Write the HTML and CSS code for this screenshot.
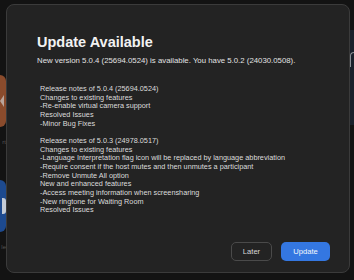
FILE: index.html
```html
<!DOCTYPE html>
<html lang="en">
<head>
  <meta charset="UTF-8">
  <meta name="viewport" content="width=device-width, initial-scale=1.0">
  <title>Update Available</title>
  <link rel="stylesheet" href="styles.css">
</head>
<body>

  <div class="screen">
    <div class="side-left">
      <div class="tile tile-orange"><span class="tile-glyph"></span></div>
      <div class="tile-label">rt</div>
      <div class="tile tile-blue"><span class="tile-blob"></span></div>
      <div class="tile-label">le</div>
    </div>

    <div class="dialog">
      <h2 class="title">Update Available</h2>
      <p class="subtitle">New version 5.0.4 (25694.0524) is available. You have 5.0.2 (24030.0508).</p>

      <div class="notes">
        <div>Release notes of 5.0.4 (25694.0524)</div>
        <div>Changes to existing features</div>
        <div>-Re-enable virtual camera support</div>
        <div>Resolved Issues</div>
        <div>-Minor Bug Fixes</div>
        <div>&nbsp;</div>
        <div>Release notes of 5.0.3 (24978.0517)</div>
        <div>Changes to existing features</div>
        <div>-Language Interpretation flag icon will be replaced by language abbreviation</div>
        <div>-Require consent if the host mutes and then unmutes a participant</div>
        <div>-Remove Unmute All option</div>
        <div>New and enhanced features</div>
        <div>-Access meeting information when screensharing</div>
        <div>-New ringtone for Waiting Room</div>
        <div>Resolved Issues</div>
        <div>-Minor Bug Fixes</div>
      </div>

      <div class="actions">
        <button type="button" class="btn btn-later">Later</button>
        <button type="button" class="btn btn-update">Update</button>
      </div>
    </div>

    <div class="side-right">
      <div class="right-panel"><span class="right-curve"></span></div>
    </div>
  </div>

</body>
</html>
```

FILE: styles.css
```css
body {
  margin: 0;
  background: #131313;
  font-family: "Liberation Sans", Arial, sans-serif;
  overflow: hidden;
}
.screen {
  display: flex;
  width: 354px;
  height: 280px;
}
.side-left {
  width: 6px;
  padding-top: 75px;
  overflow: hidden;
  flex-shrink: 0;
}
.tile {
  width: 40px;
  height: 52px;
  margin-left: -34px;
  border-radius: 6px;
  display: flex;
  align-items: center;
  justify-content: flex-end;
}
.tile-orange {
  background: #8a4b2c;
}
.tile-blue {
  background: #1d4a8f;
}
.tile-glyph {
  width: 0;
  height: 0;
  border-top: 6px solid transparent;
  border-bottom: 6px solid transparent;
  border-right: 4px solid #b9a49a;
  margin-right: 2px;
}
.tile-blob {
  width: 4px;
  height: 16px;
  border-radius: 0 3px 3px 0;
  background: #c4cbd6;
}
.tile-label {
  height: 53px;
  color: #555;
  font-size: 6px;
  line-height: 30px;
  text-align: right;
}
.dialog {
  width: 344px;
  height: 269px;
  margin-top: 4px;
  flex-shrink: 0;
  box-sizing: border-box;
  background: #232323;
  border: 1px solid #3b3b3b;
  border-radius: 8px;
  padding: 29px 19px 11px 30px;
  display: flex;
  flex-direction: column;
  color: #e2e2e2;
}
.title {
  margin: 0;
  font-size: 14.5px;
  line-height: 17px;
  font-weight: bold;
  color: #f2f2f2;
}
.subtitle {
  margin: 5px 0 0;
  font-size: 7.8px;
  line-height: 9px;
  white-space: nowrap;
}
.notes {
  margin-top: 20px;
  padding-left: 3px;
  height: 130px;
  overflow: hidden;
  font-size: 7.3px;
  line-height: 8.65px;
  white-space: nowrap;
  color: #dcdcdc;
}
.actions {
  margin-top: auto;
  display: flex;
  justify-content: flex-end;
  gap: 9px;
}
.btn {
  height: 19px;
  border-radius: 5px;
  font-family: "Liberation Sans", Arial, sans-serif;
  font-size: 7.6px;
  padding: 0;
  cursor: pointer;
}
.btn-later {
  width: 41px;
  background: transparent;
  border: 1px solid #4a4a4a;
  color: #d8d8d8;
}
.btn-update {
  width: 49px;
  background: #3477e1;
  border: none;
  color: #f4f7fd;
}
.side-right {
  width: 4px;
  flex-shrink: 0;
  padding-top: 30px;
  overflow: hidden;
}
.right-panel {
  height: 95px;
  background: #1a212c;
  display: flex;
  align-items: flex-start;
  padding-top: 22px;
  box-sizing: border-box;
}
.right-curve {
  width: 3px;
  height: 14px;
  border-left: 1px solid #8a8f96;
  border-top: 1px solid #8a8f96;
  border-radius: 4px 0 0 0;
}
```
